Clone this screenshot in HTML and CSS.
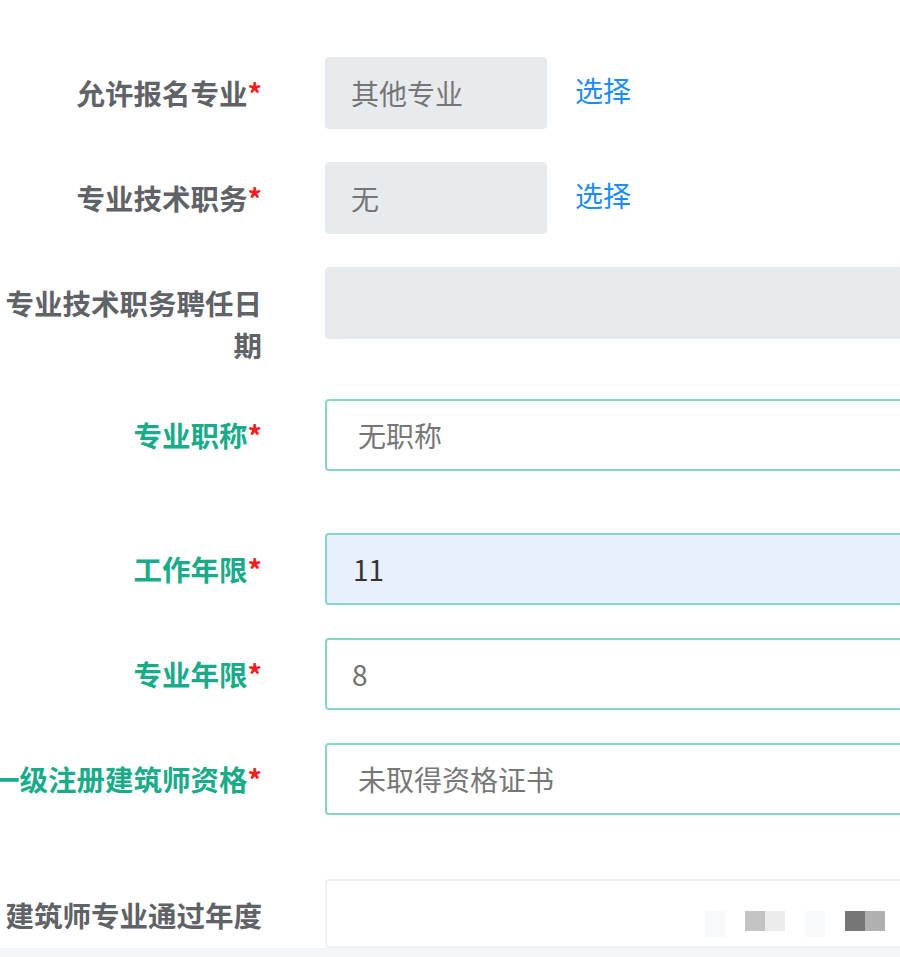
FILE: index.html
```html
<!DOCTYPE html>
<html lang="zh-CN">
<head>
<meta charset="utf-8">
<title>报名信息</title>
<link rel="stylesheet" href="styles.css">
</head>
<body>
<div class="page">
  <form class="form">
    <div class="row">
      <label class="label">允许报名专业<span class="req">*</span></label>
      <div class="field">
        <div class="input disabled short">其他专业</div>
        <a class="link">选择</a>
      </div>
    </div>
    <div class="row">
      <label class="label">专业技术职务<span class="req">*</span></label>
      <div class="field">
        <div class="input disabled short">无</div>
        <a class="link">选择</a>
      </div>
    </div>
    <div class="row">
      <label class="label">专业技术职务聘任日期</label>
      <div class="field">
        <div class="input disabled long"></div>
      </div>
    </div>
    <div class="row row-lg">
      <label class="label ok">专业职称<span class="req">*</span></label>
      <div class="field">
        <div class="input valid long select">无职称</div>
      </div>
    </div>
    <div class="row">
      <label class="label ok">工作年限<span class="req">*</span></label>
      <div class="field">
        <div class="input valid long autofill">11</div>
      </div>
    </div>
    <div class="row">
      <label class="label ok">专业年限<span class="req">*</span></label>
      <div class="field">
        <div class="input valid long muted">8</div>
      </div>
    </div>
    <div class="row row-lg2">
      <label class="label ok nowrap">一级注册建筑师资格<span class="req">*</span></label>
      <div class="field">
        <div class="input valid long select">未取得资格证书</div>
      </div>
    </div>
    <div class="row row-last">
      <label class="label">建筑师专业通过年度</label>
      <div class="field">
        <div class="input plain long last">
          <div class="mosaic">
            <span class="cell c1"></span><span class="cell"></span><span class="cell c2"></span><span class="cell c3"></span><span class="cell"></span><span class="cell c1"></span><span class="cell"></span><span class="cell c4"></span><span class="cell c5"></span>
          </div>
        </div>
      </div>
    </div>
  </form>
  <div class="strip"></div>
</div>
</body>
</html>
```
FILE: styles.css
```css
html, body {
  margin: 0;
  padding: 0;
  background: #ffffff;
}
body {
  width: 900px;
  height: 957px;
  overflow: hidden;
  font-family: "Noto Sans CJK SC", "Noto Sans", sans-serif;
}
.page {
  display: flex;
  flex-direction: column;
}
.form {
  margin: 57px 0 0 -14px;
  display: flex;
  flex-direction: column;
}
.row {
  display: flex;
  align-items: flex-start;
  gap: 63px;
  margin-bottom: 33px;
}
.row-lg {
  margin-bottom: 62px;
}
.row-lg2 {
  margin-bottom: 64px;
}
.row-last {
  margin-bottom: 0;
}
.label {
  flex: 0 0 276px;
  width: 276px;
  text-align: right;
  font-size: 28.5px;
  font-weight: 700;
  line-height: 42px;
  padding-top: 15px;
  color: #5f6266;
}
.label.nowrap {
  white-space: nowrap;
}
.label.ok {
  color: #1aab8a;
}
.req {
  color: #f51c1c;
  font-weight: 700;
}
.field {
  display: flex;
  align-items: center;
}
.input {
  box-sizing: border-box;
  height: 72px;
  border-radius: 4px;
  display: flex;
  align-items: center;
  padding-left: 25px;
  font-size: 28px;
  color: #767676;
  position: relative;
}
.short {
  width: 222px;
}
.long {
  width: 640px;
}
.disabled {
  background: #e8ebee;
  border: 1px solid #e6e9ec;
}
.valid {
  background: #ffffff;
  border: 2px solid #85d8c4;
}
.select {
  padding-left: 31px;
  color: #777777;
}
.autofill {
  background: #e8f0fe;
  color: #333333;
  padding-left: 26px;
}
.muted {
  color: #707070;
  padding-left: 25px;
}
.plain {
  background: #ffffff;
  border: 2px solid #f0f0f0;
}
.last {
  height: 69px;
}
.link {
  margin-left: 28px;
  font-size: 28px;
  color: #1e8cf5;
  cursor: pointer;
  line-height: 1;
  margin-top: -6px;
}
.mosaic {
  position: absolute;
  left: 378px;
  top: 30px;
  display: flex;
}
.cell {
  width: 20px;
  height: 20px;
}
.c1 { background: #f8f9fb; height: 26px; }
.c2 { background: #c3c3c3; }
.c3 { background: #ebebeb; }
.c4 { background: #767676; }
.c5 { background: #b0b0b0; }
.strip {
  height: 20px;
  background: #f4f5f9;
}
```
